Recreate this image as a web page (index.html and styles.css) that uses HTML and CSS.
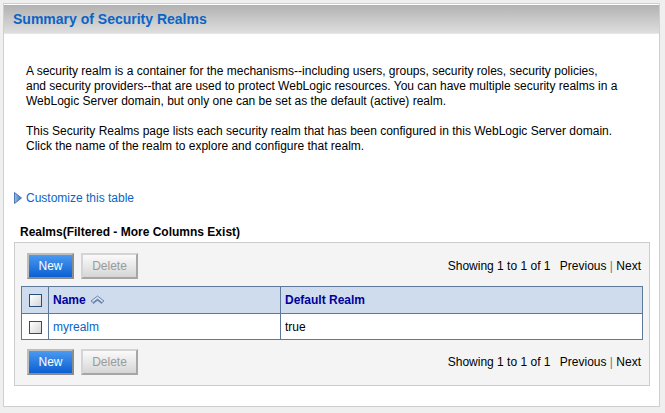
FILE: index.html
```html
<!DOCTYPE html>
<html>
<head>
<meta charset="utf-8">
<link rel="stylesheet" href="styles.css">
</head>
<body>
<div class="panel">
  <div class="header"><h1 class="title">Summary of Security Realms</h1></div>
  <div class="content">
    <div class="intro">
      <p>A security realm is a container for the mechanisms--including users, groups, security roles, security policies,<br>and security providers--that are used to protect WebLogic resources. You can have multiple security realms in a<br>WebLogic Server domain, but only one can be set as the default (active) realm.</p>
      <p>This Security Realms page lists each security realm that has been configured in this WebLogic Server domain.<br>Click the name of the realm to explore and configure that realm.</p>
    </div>
    <div class="customize">
      <svg class="tri" width="8" height="12" viewBox="0 0 8 12">
        <defs><linearGradient id="tg" x1="0" y1="0" x2="1" y2="0"><stop offset="0" stop-color="#9fbfe6"/><stop offset="1" stop-color="#3a6fb8"/></linearGradient></defs>
        <path d="M0.5 0.5 L7.5 6 L0.5 11.5 Z" fill="url(#tg)" stroke="#4a76b4" stroke-width="1"/>
      </svg>
      <a class="link" href="#">Customize this table</a>
    </div>
    <div class="caption">Realms(Filtered - More Columns Exist)</div>
    <div class="tablebox">
      <div class="toolbar">
        <div class="btns">
          <button class="btn primary">New</button>
          <button class="btn disabled">Delete</button>
        </div>
        <div class="pager">Showing 1 to 1 of 1 <span class="nav">Previous</span> <span class="sep">|</span> <span>Next</span></div>
      </div>
      <table class="grid">
        <tr class="head">
          <th class="chk"><span class="cb"></span></th>
          <th class="name">Name
            <svg class="sort" width="15" height="10" viewBox="0 0 15 10">
              <path d="M1 6 L7.5 1 L14 6 L12 7.5 L7.5 4 L3 7.5 Z" fill="#d8e2f0" stroke="#6a85ad" stroke-width="1" stroke-linejoin="round"/>
              <path d="M3 8.5 L7.5 5 L12 8.5" fill="none" stroke="#6a85ad" stroke-width="1.2"/>
            </svg>
          </th>
          <th>Default Realm</th>
        </tr>
        <tr class="row">
          <td class="chk"><span class="cb"></span></td>
          <td class="name"><a class="link" href="#">myrealm</a></td>
          <td>true</td>
        </tr>
      </table>
      <div class="toolbar bottom">
        <div class="btns">
          <button class="btn primary">New</button>
          <button class="btn disabled">Delete</button>
        </div>
        <div class="pager">Showing 1 to 1 of 1 <span class="nav">Previous</span> <span class="sep">|</span> <span>Next</span></div>
      </div>
    </div>
  </div>
</div>
</body>
</html>
```
FILE: styles.css
```css
html, body {
  margin: 0;
  padding: 0;
  background: #efefef;
  height: 413px;
  overflow: hidden;
}
body {
  padding: 3px 5px 0 3px;
  font-family: "Liberation Sans", Arial, sans-serif;
  font-size: 12px;
  color: #000;
}
.panel {
  background: #fff;
  border: 1px solid #cfcfcf;
  height: 404px;
  box-sizing: border-box;
  width: 657px;
}
.header {
  margin-top: 1px;
  height: 28px;
  background: linear-gradient(#b2b2b2, #dedede);
  border-bottom: 1px solid #e6e6e6;
  display: flex;
  align-items: center;
  padding-left: 9px;
}
.title {
  margin: 0;
  font-size: 14px;
  font-weight: bold;
  color: #0a64c8;
}
.content {
  padding: 0 9px 0 10px;
}
.intro {
  padding: 30px 0 0 12px;
}
.intro p {
  margin: 0 0 15px 0;
  line-height: 15px;
  white-space: nowrap;
}
.customize {
  margin-top: 36px;
  display: flex;
  align-items: center;
  height: 15px;
}
.tri {
  margin-right: 4px;
}
.link {
  color: #0a64c8;
  text-decoration: none;
}
.caption {
  margin-top: 20px;
  padding-left: 6px;
  font-weight: bold;
  height: 15px;
  line-height: 15px;
}
.tablebox {
  margin-top: 2px;
  background: #f4f4f4;
  border: 1px solid #cccccc;
  height: 144px;
  box-sizing: border-box;
  padding: 10px 8px 0 6px;
}
.toolbar {
  display: flex;
  justify-content: space-between;
  align-items: center;
  padding-left: 6px;
}
.toolbar.bottom {
  margin-top: 9px;
}
.btns {
  display: flex;
  gap: 7px;
}
.btn {
  height: 26px;
  font-family: "Liberation Sans", Arial, sans-serif;
  font-size: 12px;
  border: 2px solid;
  padding: 0;
}
.btn.primary {
  width: 47px;
  color: #fff;
  background: linear-gradient(#4a9af0, #0c60d2);
  border-color: #bdbdbd #8c8c8c #8c8c8c #bdbdbd;
}
.btn.disabled {
  width: 57px;
  color: #9a9a9a;
  background: linear-gradient(#fafafa, #d6d6d6);
  border-color: #d4d4d4 #a6a6a6 #a6a6a6 #d4d4d4;
}
.pager {
  color: #000;
}
.pager .nav {
  margin-left: 6px;
}
.pager .sep {
  color: #777;
}
.grid {
  margin-top: 7px;
  width: 622px;
  border-collapse: collapse;
  border: 1px solid #5e7899;
}
.grid th, .grid td {
  border: 1px solid #5e7899;
  height: 25px;
  padding: 0 4px;
  text-align: left;
}
.grid th {
  height: 26px;
  background: #cfdcee;
  color: #00009c;
  font-weight: bold;
}
.grid td {
  background: #fff;
}
.grid .chk {
  width: 26px;
  text-align: center;
  padding: 0;
}
.grid .name {
  width: 223px;
}
.sort {
  vertical-align: -1px;
  margin-left: 1px;
}
.cb {
  display: inline-block;
  width: 11px;
  height: 11px;
  border: 1px solid #244f7e;
  background: linear-gradient(135deg, #ffffff, #d6d6d6);
  vertical-align: middle;
}
```
